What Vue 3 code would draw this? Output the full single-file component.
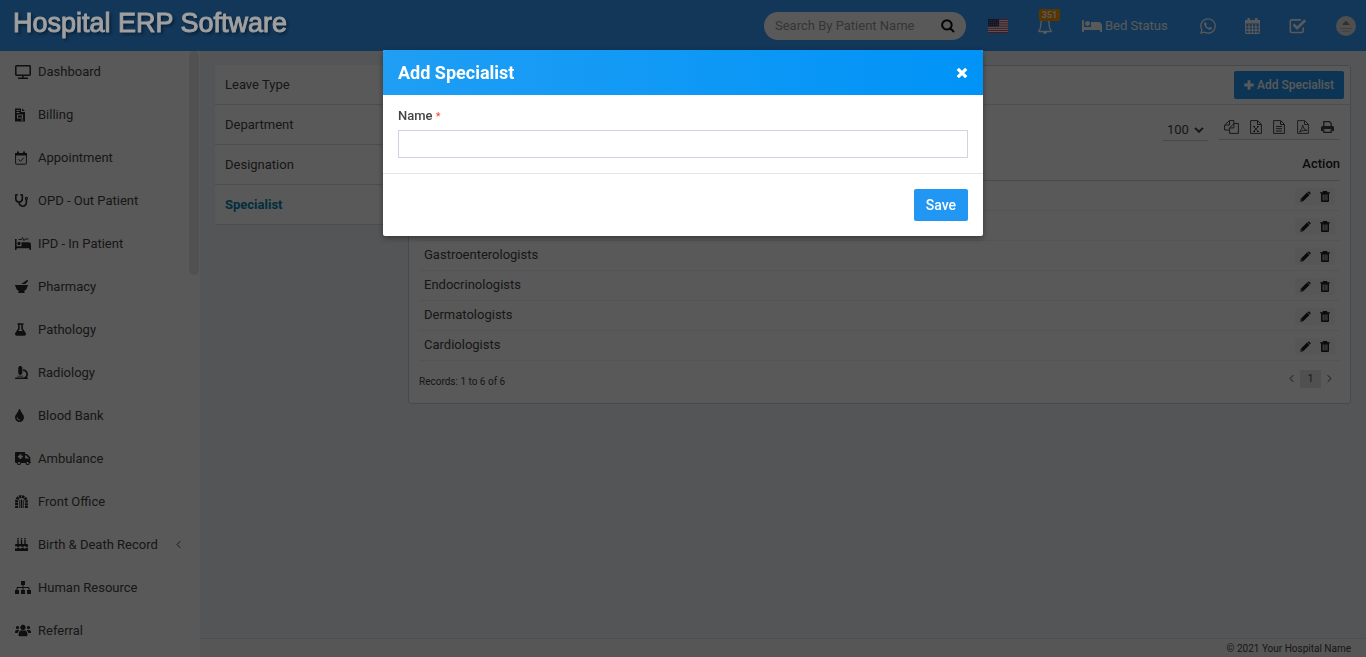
<script setup>
import { h, ref } from 'vue'

const icons = {
  monitor: { w: 16, h: 14, vb: '0 0 16 14', s: ['M.8 1.5q0-.7.7-.7h13q.7 0 .7.7v8q0 .7-.7.7h-13q-.7 0-.7-.7zM8 10.5v2.5M3 13.2h10'], sw: 1.5 },
  invoice: { w: 10, h: 14, vb: '0 0 10 14', f: ['M0 .5h6V4h4v9.500H0zM7 .5 10 3H7zM1.500 2v1h3V2zm0 2v1h3V4zM2 6.500v4h6v-4zM3 7.500h4v2H3zM6 11.500v1h2.500v-1z'] },
  calcheck: { w: 12, h: 14, vb: '0 0 12 14', f: ['M0 2h2V.5h2V2h4V.5h2V2h2v2.400H0z'], s: ['M.6 4v8.500q0 .7.7.7h9.400q.7 0 .7-.7V4M3.500 8.300l2 2 3.300-3.600'], sw: 1 },
  stethoscope: { w: 13, h: 13, vb: '0 0 512 512', f: ['M447.1 112c-34.2.5-62.3 28.4-63 62.6-.5 24.3 12.5 45.6 32 56.8V344c0 57.3-50.2 104-112 104-60 0-109.2-44.1-111.9-99.2C265 333.8 320 269.2 320 192V36.6c0-11.4-8.1-21.3-19.3-23.5L237.8.5c-13-2.6-25.600 5.800-28.200 18.800L206.400 35c-2.600 13 5.800 25.600 18.800 28.200l30.700 6.100v121.400c0 52.900-42.200 96.700-95.100 97.200-53.400.5-96.900-42.700-96.900-96V69.400l30.700-6.100c13-2.600 21.400-15.200 18.800-28.200l-3.100-15.700C107.700 6.400 95.100-2 82.100.6L19.300 13C8.100 15.300 0 25.100 0 36.600V192c0 77.300 55.100 142 128.100 156.800C130.700 439.200 208.600 512 304 512c97 0 176-75.400 176-168V231.400c19.100-11.100 32-31.700 32-55.400 0-35.700-29.200-64.500-64.900-64zm.9 80c-8.800 0-16-7.200-16-16s7.200-16 16-16 16 7.200 16 16-7.200 16-16 16z'] },
  procedures: { w: 16, h: 13, vb: '0 0 16 13', f: ['M0 2h1.600v7.300h4.900V5.200h7.300q2.200 0 2.200 2.300V13h-1.600v-1.700H1.600V13H0zM4 4.800a1.700 1.700 0 1 1 0 3.400 1.700 1.700 0 0 1 0-3.400z'], s: ['M3.500 2.500h3l1-2 1.500 3.200 1-1.700h3.500'], sw: 0.9 },
  mortar: { w: 13, h: 13, vb: '0 0 512 512', f: ['M501.540 60.910c17.220-17.220 12.510-46.250-9.270-57.140a35.700 35.700 0 0 0-37.370 3.370L251.090 160h151.370l99.080-99.090zM496 192H16c-8.840 0-16 7.160-16 16v32c0 8.840 7.160 16 16 16h16c0 80.980 50.200 150.110 121.130 178.320-12.760 16.870-21.720 36.800-24.950 58.690-1.460 9.920 6.040 18.980 16.070 18.980h223.500c10.030 0 17.530-9.060 16.070-18.980-3.220-21.890-12.180-41.820-24.950-58.690C429.800 406.110 480 336.980 480 256h16c8.840 0 16-7.160 16-16v-32c0-8.840-7.160-16-16-16z'] },
  flask: { w: 11, h: 13, vb: '0 0 448 512', f: ['M437.200 403.500L320 215V64h8c13.300 0 24-10.700 24-24V24c0-13.300-10.700-24-24-24H120c-13.300 0-24 10.700-24 24v16c0 13.300 10.700 24 24 24h8v151L10.800 403.500C-18.500 450.600 15.300 512 70.900 512h306.200c55.700 0 89.400-61.500 60.100-108.500zM137.900 320l48.200-77.600c3.700-5.200 5.800-11.600 5.800-18.400V64h64v160c0 6.900 2.200 13.200 5.800 18.400l48.200 77.600h-172z'] },
  microscope: { w: 13, h: 13, vb: '0 0 512 512', f: ['M160 320h12v16c0 8.840 7.160 16 16 16h40c8.840 0 16-7.160 16-16v-16h12c17.670 0 32-14.330 32-32V64c0-17.670-14.330-32-32-32V16c0-8.840-7.160-16-16-16h-64c-8.840 0-16 7.160-16 16v16c-17.670 0-32 14.330-32 32v224c0 17.670 14.330 32 32 32zm304 128h-1.290C493.240 413.990 512 369.200 512 320c0-105.880-86.120-192-192-192v64c70.580 0 128 57.420 128 128s-57.420 128-128 128H48c-26.510 0-48 21.490-48 48 0 8.840 7.160 16 16 16h480c8.840 0 16-7.160 16-16 0-26.510-21.490-48-48-48zm-360-32h208c4.420 0 8-3.580 8-8v-16c0-4.420-3.580-8-8-8H104c-4.420 0-8 3.580-8 8v16c0 4.420 3.580 8 8 8z'] },
  drop: { w: 9, h: 13, vb: '0 0 352 512', f: ['M205.220 22.090c-7.940-28.780-49.440-30.120-58.440 0C100.010 179.850 0 222.720 0 333.910 0 432.350 78.720 512 176 512s176-79.650 176-178.090c0-111.750-99.790-153.340-146.780-311.820zM176 448c-61.750 0-112-50.250-112-112 0-8.840 7.160-16 16-16s16 7.160 16 16c0 44.110 35.890 80 80 80 8.840 0 16 7.160 16 16s-7.160 16-16 16z'] },
  ambulance: { w: 16, h: 13, vb: '0 0 16 13', f: ['M1 0h8.500q.7 0 .7.7V2h1.800l3.300 3.300V10H16v1h-1.300a2.100 2.100 0 0 1-4.200 0H6.100a2.100 2.100 0 0 1-4.200 0H1q-1 0-1-1V1q0-1 1-1zM4.500 2.200v1.600H2.900v1.700h1.600v1.600h1.700V5.500h1.600V3.800H6.200V2.200zM10.200 3.300v3.200h4l-3.200-3.200zM4 10a1 1 0 1 0 .01 0zM12.600 10a1 1 0 1 0 .01 0z'] },
  arch: { w: 13, h: 13, vb: '0 0 13 13', s: ['M1.600 13V6.500a4.900 4.900 0 0 1 9.800 0V13'], sw: 3, dash: '2.300 .6', s2: ['M4.800 5v8M6.500 4.500V13M8.200 5v8'] },
  cake: { w: 13, h: 13, vb: '0 0 13 13', f: ['M2.300 2h1.400v4h2.100V2h1.400v4h2.100V2h1.400v4H12q1 0 1 1v1.500q-1 1-2.200 0-1.100-1-2.200 0t-2.200 0-2.200 0-2.200 0T0 8.500V7q0-1 1-1h1.300zM2.300 0h1.400v1.400H2.300zM5.800 0h1.400v1.400H5.800zM9.300 0h1.400v1.400H9.300zM0 10q1.100 1 2.200 0t2.200 0 2.200 0 2.200 0 2.200 0T13 10v3H0z'] },
  sitemap: { w: 16, h: 13, vb: '0 0 16 13', f: ['M6 0h4v4H6zM0 9h4v4H0zM6 9h4v4H6zM12 9h4v4h-4z'], s: ['M2 9V6.500h12V9M8 4v5'], sw: 1 },
  users: { w: 16, h: 13, vb: '0 0 16 13', f: ['M8 .8a2.700 2.700 0 1 1-.01 0zM3.500 11.500q0-5 3-5.200 1.500.9 3 0 3 .2 3 5.200-.2.8-1 .8h-7q-.8 0-1-.8zM2.500 2a1.600 1.600 0 1 1-.01 0zM13.500 2a1.600 1.600 0 1 1-.01 0zM0 8q0-2 1.600-2h2q.6 0 .9.3Q3 7.300 2.700 9H.5Q0 9 0 8.500zM16 8q0-2-1.600-2h-2q-.6 0-.9.3Q13 7.300 13.300 9h2.200q.5 0 .5-.5z'] },
  chevLeft: { w: 5, h: 9, vb: '0 0 5 9', s: ['M4.300 1.200 1 4.500l3.300 3.300'], sw: 1 },
  chevRight: { w: 5, h: 9, vb: '0 0 5 9', s: ['M.7 1.200 4 4.500.7 7.800'], sw: 1 },
  search: { w: 14, h: 14, vb: '0 0 14 14', s: ['M5.900 1.200a4.700 4.700 0 1 1-.01 0zM9.300 9.300l3.700 3.700'], sw: 2 },
  bell: { w: 16, h: 18, vb: '0 0 16 18', f: ['M6 15h4a2 2 0 0 1-4 0z'], s: ['M4 5q-.1 6.500-2 8.600-.7.9.2.9h11.600q.9 0 .2-.9Q12.100 11.500 12 5q-1-3-4-3T4 5z'] },
  bed: { w: 20, h: 16, vb: '0 0 640 512', f: ['M176 256c44.110 0 80-35.890 80-80s-35.890-80-80-80-80 35.890-80 80 35.890 80 80 80zm352-128H304c-8.840 0-16 7.160-16 16v144H64V80c0-8.840-7.160-16-16-16H16C7.160 64 0 71.160 0 80v352c0 8.840 7.160 16 16 16h32c8.840 0 16-7.160 16-16v-48h512v48c0 8.840 7.160 16 16 16h32c8.840 0 16-7.160 16-16V240c0-61.860-50.140-112-112-112z'] },
  whatsapp: { w: 16, h: 18, vb: '0 0 448 512', f: ['M380.900 97.100C339 55.100 283.200 32 223.900 32c-122.400 0-222 99.600-222 222 0 39.100 10.200 77.300 29.600 111L0 480l117.700-30.900c32.400 17.700 68.900 27 106.100 27h.1c122.300 0 224.100-99.600 224.100-222 0-59.300-25.200-115-67.100-157zm-157 341.600c-33.200 0-65.700-8.900-94-25.700l-6.700-4-69.800 18.300L72 359.200l-4.400-7c-18.500-29.400-28.200-63.300-28.200-98.200 0-101.700 82.800-184.500 184.600-184.500 49.300 0 95.600 19.200 130.400 54.100 34.800 34.900 56.200 81.200 56.100 130.500 0 101.800-84.900 184.600-186.600 184.600zm101.200-138.200c-5.500-2.800-32.800-16.200-37.900-18-5.100-1.900-8.800-2.800-12.500 2.800-3.700 5.600-14.300 18-17.600 21.800-3.200 3.700-6.500 4.200-12 1.400-32.600-16.300-54-29.100-75.500-66-5.700-9.800 5.700-9.100 16.300-30.300 1.800-3.700.9-6.900-.5-9.700-1.400-2.800-12.500-30.100-17.100-41.200-4.500-10.800-9.100-9.300-12.500-9.500-3.200-.2-6.900-.2-10.600-.2-3.700 0-9.700 1.400-14.800 6.900-5.100 5.600-19.400 19-19.400 46.300 0 27.300 19.900 53.700 22.600 57.400 2.800 3.700 39.100 59.700 94.800 83.800 35.200 15.200 49 16.500 66.600 13.900 10.700-1.600 32.800-13.400 37.400-26.400 4.600-13 4.600-24.100 3.200-26.400-1.300-2.500-5-3.900-10.500-6.600z'] },
  calendar: { w: 15, h: 16, vb: '0 0 15 16', f: ['M0 2h2.500V0H5v2h5V0h2.500v2H15v3.500H0z'], s: ['M.7 5v9.600q0 .7.7.7h12.200q.7 0 .7-.7V5M4.100 6v9M7.500 6v9M10.900 6v9M1 9h13M1 12.200h13'], sw: 1.2 },
  task: { w: 18, h: 16, vb: '0 0 18 16', s: ['M12 1.900H3Q1.300 1.900 1.300 3.600v9.200q0 1.700 1.700 1.700h9.500q1.700 0 1.700-1.700V9.500'], sw: 1.6, s2: ['M4.500 6.500l3.700 3.700 8-8'], sw2: 2.7 },
  plus: { w: 10, h: 10, vb: '0 0 10 10', f: ['M3.600.3h2.800v3.300h3.300v2.800H6.400v3.300H3.600V6.400H.3V3.600h3.300z'] },
  copy: { w: 15, h: 14, vb: '0 0 15 14', s: ['M5.500 3.700V.6h4.300v2.600M5.500.6.6 5v5h4.700M5.500 1v4H1M9.800 3.500h4.600v9.900H5.600V7.800zM9.900 3.800v4.100H6'], sw: 1 },
  excel: { w: 12, h: 14, vb: '0 0 12 14', s: ['M.6.6h7L11.400 4.300v9.100H.6zM7.500.8v3.700h3.700M3.700 6.700l4.400 4.700M8.100 6.700l-4.400 4.700M3 6.500h2M7 6.500h2M3 11.500h2M7 11.500h2'], sw: 1 },
  text: { w: 12, h: 14, vb: '0 0 12 14', s: ['M.6.6h7L11.400 4.300v9.100H.6zM7.500.8v3.700h3.700M3 6.500h6M3 8.700h6M3 11h6'], sw: 1 },
  pdf: { w: 12, h: 14, vb: '0 0 12 14', s: ['M.6.6h7L11.400 4.300v9.100H.6zM7.500.8v3.700h3.700', 'M2.500 12q2.800-2.700 3.100-7 .5 4.600 4.400 5.500-4-.9-7.500 1.500z'], sw: 0.9 },
  print: { w: 13, h: 12, vb: '0 0 13 12', f: ['M0 6.500Q0 5 1.500 5h10Q13 5 13 6.500V10h-2.300V8H2.300v2H0z'], s: ['M2.800 5V.7h5.700l1.700 1.700V5M2.800 8.500v2.800h7.400V8.500'] },
  pencil: { w: 11, h: 11, vb: '0 0 11 11', f: ['M7 1.500 9.500 4 3.200 10.300.3 10.800.8 7.800zM7.700.9Q8.600 0 9.500.8l.8.8q.7.9 0 1.700l-.3.3L7.400 1.200zM1.700 8.300l-.3 1.300 1.300-.3z'] },
  trash: { w: 10, h: 11, vb: '0 0 10 11', f: ['M3 0h4l.5 1.200H10v1.100H9V10q0 1-1 1H2q-1 0-1-1V2.300H0V1.200h2.500zM2.700 3.400v6h.9v-6zm1.900 0v6h.9v-6zm1.900 0v6h.9v-6z'] },
  close: { w: 12, h: 12, vb: '0 0 12 12', s: ['M1.800 1.800l8.400 8.400M10.200 1.800l-8.400 8.400'], sw: 3.2 },
  down: { w: 10, h: 6, vb: '0 0 10 6', s: ['M1 .9l4 3.900L9 .9'], sw: 2 }
}

function Icon(props) {
  const i = icons[props.name]
  const stroke = (d, width, dash) => h('path', { d, fill: 'none', stroke: 'currentColor', 'stroke-width': width, 'stroke-dasharray': dash })
  return h('svg', { width: i.w, height: i.h, viewBox: i.vb, 'aria-hidden': 'true' }, [
    ...(i.f || []).map(d => h('path', { d, fill: 'currentColor', 'fill-rule': 'evenodd' })),
    ...(i.s || []).map(d => stroke(d, i.sw || 1.3, i.dash)),
    ...(i.s2 || []).map(d => stroke(d, i.sw2 || 1))
  ])
}
Icon.props = ['name']

const menu = [
  ['Dashboard', 'monitor'], ['Billing', 'invoice'], ['Appointment', 'calcheck'],
  ['OPD - Out Patient', 'stethoscope'], ['IPD - In Patient', 'procedures'], ['Pharmacy', 'mortar'],
  ['Pathology', 'flask'], ['Radiology', 'microscope'], ['Blood Bank', 'drop'], ['Ambulance', 'ambulance'],
  ['Front Office', 'arch'], ['Birth & Death Record', 'cake'], ['Human Resource', 'sitemap'], ['Referral', 'users']
]
const tabs = ['Leave Type', 'Department', 'Designation', 'Specialist']
const rows = ['', '', 'Gastroenterologists', 'Endocrinologists', 'Dermatologists', 'Cardiologists']
const exportsList = [['Copy', 'copy'], ['Excel', 'excel'], ['CSV', 'text'], ['PDF', 'pdf'], ['Print', 'print']]
const name = ref('')
const search = ref('')
</script>

<template>
  <div class="page">
    <header class="topbar">
      <a href="#" class="brand">Hospital ERP Software</a>
      <form class="search" @submit.prevent>
        <input v-model="search" type="text" placeholder="Search By Patient Name" aria-label="Search By Patient Name">
        <button type="submit" aria-label="Search"><Icon name="search" /></button>
      </form>
      <nav class="tools">
        <a href="#" class="flag" aria-label="Language">
          <svg width="20" height="14" viewBox="0 0 20 14">
            <rect width="20" height="14" fill="#f4f0f4" />
            <path d="M0 .5h20M0 2.700h20M0 4.900h20M0 7.100h20M0 9.300h20M0 11.500h20M0 13.500h20" stroke="#c8465a" stroke-width="1" />
            <rect width="11" height="7.500" fill="#39416f" />
            <path d="M1 1.500h9M1 3.500h9M1 5.500h9" stroke="#8b91b5" stroke-width=".6" stroke-dasharray="1 1" />
          </svg>
        </a>
        <a href="#" class="bell" aria-label="Notifications"><Icon name="bell" /><span class="badge">351</span></a>
        <a href="#" class="beds"><Icon name="bed" /><span>Bed Status</span></a>
        <a href="#" aria-label="WhatsApp"><Icon name="whatsapp" /></a>
        <a href="#" aria-label="Calendar"><Icon name="calendar" /></a>
        <a href="#" aria-label="Tasks"><Icon name="task" /></a>
        <a href="#" aria-label="Profile">
          <svg width="20" height="20" viewBox="0 0 20 20">
            <circle cx="10" cy="10" r="10" fill="#e2e2e2" />
            <path d="M6.500 9q0-2 1.700-2 .2-2 1.800-2t1.800 2q1.700 0 1.700 2z" fill="#8b8b8b" />
            <path d="M4 12.500h12M6 15.200h8" stroke="#b4b4b4" />
          </svg>
        </a>
      </nav>
    </header>

    <div class="layout">
      <aside class="sidebar">
        <ul>
          <li v-for="[label, icon] in menu" :key="label">
            <a href="#">
              <span class="ico"><Icon :name="icon" /></span>
              <span>{{ label }}</span>
              <Icon v-if="icon === 'cake'" name="chevLeft" class="caret" />
            </a>
          </li>
        </ul>
        <div class="thumb"></div>
      </aside>

      <div class="content">
        <main class="main">
          <nav class="tabs">
            <a v-for="t in tabs" :key="t" href="#" :class="{ active: t === 'Specialist' }">{{ t }}</a>
          </nav>
          <section class="card">
            <div class="card-head">
              <button type="button" class="add"><Icon name="plus" />Add Specialist</button>
            </div>
            <div class="card-body">
              <div class="table-tools">
                <div class="length">
                  <select aria-label="Rows per page"><option>100</option></select>
                  <Icon name="down" />
                </div>
                <div class="exports">
                  <button v-for="[label, icon] in exportsList" :key="label" type="button" :aria-label="label"><Icon :name="icon" /></button>
                </div>
              </div>
              <table>
                <thead><tr><th></th><th>Action</th></tr></thead>
                <tbody>
                  <tr v-for="(r, i) in rows" :key="i">
                    <td>{{ r }}</td>
                    <td>
                      <div class="actions">
                        <button type="button" aria-label="Edit"><Icon name="pencil" /></button>
                        <button type="button" aria-label="Delete"><Icon name="trash" /></button>
                      </div>
                    </td>
                  </tr>
                </tbody>
              </table>
              <div class="table-foot">
                <span>Records: 1 to 6 of 6</span>
                <div class="pager">
                  <button type="button" aria-label="Previous"><Icon name="chevLeft" /></button>
                  <button type="button" class="current">1</button>
                  <button type="button" aria-label="Next"><Icon name="chevRight" /></button>
                </div>
              </div>
            </div>
          </section>
        </main>
        <footer class="footer">© 2021 Your Hospital Name</footer>
      </div>
    </div>

    <div class="overlay">
      <form class="modal" role="dialog" aria-labelledby="dlg-title" @submit.prevent>
        <div class="modal-head">
          <h2 id="dlg-title">Add Specialist</h2>
          <button type="button" aria-label="Close"><Icon name="close" /></button>
        </div>
        <div class="modal-body">
          <label for="spec-name">Name <small>*</small></label>
          <input id="spec-name" v-model="name" type="text">
        </div>
        <div class="modal-foot"><button type="submit">Save</button></div>
      </form>
    </div>
  </div>
</template>

<style>
body { margin: 0; overflow: hidden; }
</style>

<style scoped>
* { box-sizing: border-box; }
.page { height: 100vh; display: flex; flex-direction: column; font: 13px/20px Roboto, "Liberation Sans", sans-serif; color: #444; }
a { color: inherit; text-decoration: none; }
button { font: inherit; color: inherit; border: 0; background: none; padding: 0; display: flex; align-items: center; justify-content: center; }
svg { display: block; flex: none; }

.topbar { flex: none; height: 51px; background: #369dff; display: flex; align-items: center; padding: 0 10px 0 13px; color: #fff; }
.brand { position: relative; z-index: 11; font: 27px/30px "Liberation Sans", Arial, sans-serif; -webkit-text-stroke: 1px #a0a0a0; color: #a0a0a0; text-shadow: 2px 2px 3px #061a2e; padding-bottom: 6px; }
.search { margin-left: auto; width: 202px; height: 28px; border-radius: 14px; background: #fff; display: flex; align-items: center; padding: 0 11px; }
.search input { flex: 1; min-width: 0; border: 0; padding: 0; background: none; font: inherit; outline: 0; }
.search input::placeholder { color: #999; opacity: 1; }
.search button { color: #111; }
.tools { display: flex; align-items: center; gap: 29px; margin-left: 22px; }
.bell { position: relative; }
.badge { position: absolute; left: 2px; top: -8px; width: 21px; background: #ff9800; border-radius: 2px; font-size: 9px; font-weight: 700; line-height: 12px; text-align: center; }
.beds { display: flex; align-items: center; gap: 3px; min-width: 89px; }

.layout { flex: 1; min-height: 0; display: flex; }
.sidebar { position: relative; width: 200px; flex: none; background: #fff; overflow: hidden; }
.sidebar ul { list-style: none; margin: 0; padding: 0; }
.sidebar a { display: flex; align-items: center; height: 43px; padding: 0 0 2px 15px; }
.ico { width: 23px; color: #2c2c2c; }
.caret { margin-left: 18px; }
.thumb { position: absolute; right: 1px; top: 0; width: 10px; height: 224px; border-radius: 5px; background: #e8e8e8; }

.content { flex: 1; min-width: 0; display: flex; flex-direction: column; background: #f1f4f8; }
.main { flex: 1; display: flex; align-items: flex-start; gap: 15px; padding: 14px 15px; }
.tabs { width: 178px; flex: none; background: #fff; border-radius: 3px; }
.tabs a { display: block; height: 40px; padding: 10px 10px 9px; border-bottom: 1px solid #dcdce0; }
.tabs .active { color: #0084b4; font-weight: 700; }
.card { flex: 1; min-width: 0; background: #fff; border: 1px solid #c8d4da; border-radius: 3px; }
.card-head { display: flex; justify-content: flex-end; padding: 5px 6px; border-bottom: 1px solid #dce0e4; }
.add { height: 28px; padding: 0 10px; gap: 3px; border-radius: 2px; background: #2196f3; color: #fff; font-size: 12px; font-weight: 500; }
.card-body { padding: 10px; }
.table-tools { display: flex; justify-content: flex-end; align-items: flex-start; gap: 11px; height: 33px; }
.length { position: relative; width: 45px; height: 26px; border-bottom: 1px solid #d0d0d0; }
.length select { display: block; appearance: none; border: 0; background: none; font: inherit; color: inherit; width: 100%; height: 25px; padding: 5px 0 0 4px; margin: 0; }
.length svg { position: absolute; right: 4px; top: 12px; pointer-events: none; }
.exports { display: flex; height: 25px; width: 121px; padding: 0 1px; border-bottom: 1px solid #d0d0d0; }
.exports button { flex: 1; }
table { width: 100%; border-collapse: collapse; }
th { height: 32px; padding: 0; border-bottom: 1px solid #d0d0d0; color: #222; font-weight: 500; text-align: right; }
td { height: 30px; padding: 0 5px; border-bottom: 1px solid #f1f1f1; }
.actions { display: flex; justify-content: flex-end; padding-top: 2px; color: #222; }
.actions button { width: 20px; height: 17px; background: #f6f6f6; border-radius: 2px; }
.table-foot { display: flex; justify-content: space-between; align-items: flex-start; font-size: 10px; height: 32px; padding-top: 9px; line-height: 24px; }
.pager { display: flex; gap: 6px; padding-right: 8px; line-height: 18px; }
.pager .current { width: 21px; height: 18px; background: #e4e4e4; }
.footer { flex: none; height: 19px; border-top: 1px solid #dde0e6; padding: 0 15px; font-size: 10px; line-height: 19px; text-align: right; background: #f6f6f6; }

.overlay { position: fixed; inset: 0; z-index: 10; background: rgba(0, 0, 0, .65); padding-top: 50px; display: flex; justify-content: center; align-items: flex-start; }
.modal { width: 600px; max-width: 100%; background: #fff; border-radius: 2px; overflow: hidden; box-shadow: 0 2px 6px rgba(0, 0, 0, .4); }
.modal-head { height: 45px; padding: 0 15px; display: flex; align-items: center; justify-content: space-between; color: #fff; background: linear-gradient(to right, #1f9ef4, #0093f7); }
.modal-head h2 { margin: 0; font-size: 18px; line-height: 24px; font-weight: 700; }
.modal-body { padding: 11px 15px 15px; border-bottom: 1px solid #e5e5e5; }
.modal-body label { display: block; height: 20px; margin-bottom: 4px; font-weight: 500; }
.modal-body small { color: #f44336; font-size: 11px; font-weight: 400; }
.modal-body input { display: block; width: 100%; height: 28px; border: 1px solid #d2d2e0; padding: 0 8px; font: inherit; outline: 0; }
.modal-foot { display: flex; justify-content: flex-end; padding: 15px; }
.modal-foot button { height: 32px; padding: 0 12px; border-radius: 2px; background: #2196f3; color: #fff; font-size: 14px; font-weight: 500; }
</style>
